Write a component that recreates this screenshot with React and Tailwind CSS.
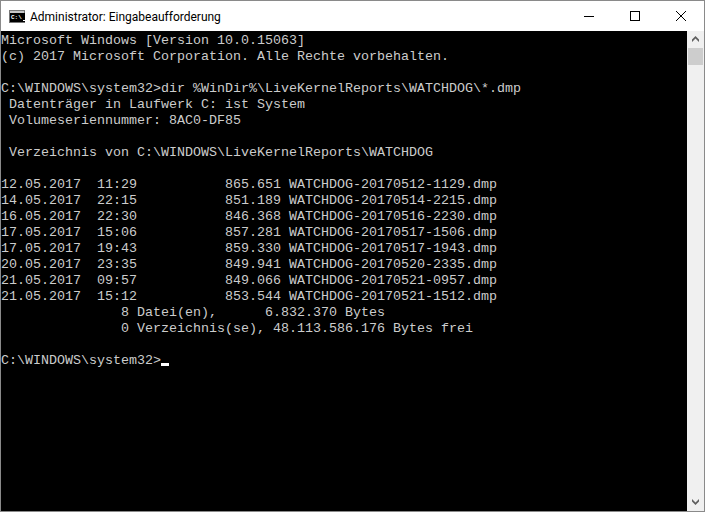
const lines = [
    'Microsoft Windows [Version 10.0.15063]',
    '(c) 2017 Microsoft Corporation. Alle Rechte vorbehalten.',
    '',
    'C:\\WINDOWS\\system32>dir %WinDir%\\LiveKernelReports\\WATCHDOG\\*.dmp',
    ' Datenträger in Laufwerk C: ist System',
    ' Volumeseriennummer: 8AC0-DF85',
    '',
    ' Verzeichnis von C:\\WINDOWS\\LiveKernelReports\\WATCHDOG',
    '',
    '12.05.2017  11:29           865.651 WATCHDOG-20170512-1129.dmp',
    '14.05.2017  22:15           851.189 WATCHDOG-20170514-2215.dmp',
    '16.05.2017  22:30           846.368 WATCHDOG-20170516-2230.dmp',
    '17.05.2017  15:06           857.281 WATCHDOG-20170517-1506.dmp',
    '17.05.2017  19:43           859.330 WATCHDOG-20170517-1943.dmp',
    '20.05.2017  23:35           849.941 WATCHDOG-20170520-2335.dmp',
    '21.05.2017  09:57           849.066 WATCHDOG-20170521-0957.dmp',
    '21.05.2017  15:12           853.544 WATCHDOG-20170521-1512.dmp',
    '               8 Datei(en),      6.832.370 Bytes',
    '               0 Verzeichnis(se), 48.113.586.176 Bytes frei',
    '',
];

const ScrollArrow = ({ points }) => (
    <svg width="9" height="7" viewBox="0 0 9 7" fill="#606060">
        <polygon points={points} />
    </svg>
);

const App = () => {
    return (
        <div className="w-[705px] h-[512px] border border-[#8a8a8a] bg-white flex flex-col overflow-hidden">
            {/* Title bar */}
            <div className="h-[30px] flex items-center shrink-0">
                <div className="ml-[8px] mt-[1px] w-[16px] h-[13px] bg-[#c8c8c8] border border-[#777777] pt-[2px] flex">
                    <div className="flex-1 bg-black flex items-end gap-[1px] pl-[1px] pb-[1px]">
                        <span className="text-[6px] leading-[7px] text-white font-['Liberation_Mono',monospace] font-bold">C:\</span>
                        <div className="w-[2px] h-[1px] bg-white"></div>
                    </div>
                </div>
                <span className="ml-[5px] mt-[1px] text-[12px] text-black font-['Roboto',sans-serif]">Administrator: Eingabeaufforderung</span>
                <div className="ml-auto flex h-full">
                    <div className="w-[46px] flex items-center justify-center"><div className="w-[10px] h-[1px] bg-black"></div></div>
                    <div className="w-[46px] flex items-center justify-center"><div className="w-[10px] h-[10px] border border-black"></div></div>
                    <div className="w-[46px] flex items-center justify-center">
                        <svg width="10" height="10" viewBox="0 0 10 10" stroke="black" strokeWidth="1"><path d="M0 0 L10 10 M10 0 L0 10" /></svg>
                    </div>
                </div>
            </div>
            {/* Console */}
            <div className="flex-1 flex min-h-0">
                <div className="flex-1 bg-black text-[#cccccc] font-['Liberation_Mono',monospace] text-[13.33px] leading-[20px] whitespace-pre">
                    {lines.map((line, i) => (
                        <div key={i} className="h-[16px]">{line}</div>
                    ))}
                    <div className="h-[16px] flex items-start">
                        <span>C:\WINDOWS\system32&gt;</span>
                        <span className="mt-[12px] w-[8px] h-[3px] bg-white"></span>
                    </div>
                </div>
                {/* Scrollbar */}
                <div className="w-[17px] bg-[#f0f0f0] flex flex-col">
                    <div className="h-[17px] flex items-center justify-center"><ScrollArrow points="4.5,0 8,3.5 8,6 4.5,2.5 1,6 1,3.5" /></div>
                    <div className="h-[17px] mx-[1px] bg-[#cdcdcd]"></div>
                    <div className="flex-1"></div>
                    <div className="h-[17px] flex items-center justify-center"><ScrollArrow points="1,0 4.5,3.5 8,0 8,2.5 4.5,6 1,2.5" /></div>
                </div>
            </div>
        </div>
    );
};

export default App;
